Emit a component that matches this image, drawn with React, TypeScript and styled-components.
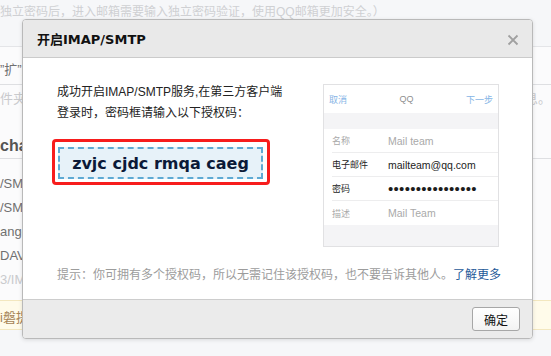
import React from 'react'
import styled, { createGlobalStyle } from 'styled-components'

const GlobalStyle = createGlobalStyle`
  html, body {
    margin: 0;
    padding: 0;
    background: #f6f7f9;
  }
  body {
    font-family: "Liberation Sans", "Noto Sans CJK SC", sans-serif;
  }
`

const Page = styled.div`
  position: relative;
  width: 551px;
  height: 356px;
  overflow: hidden;
  background: #f6f7f9;
`

const TopNote = styled.div`
  height: 47px;
  box-sizing: border-box;
  padding-top: 4px;
  font-size: 12px;
  line-height: 16px;
  color: #cfd0d3;
  white-space: nowrap;
  border-bottom: 1px solid #e4e5e8;
`

const List = styled.div`
  background: #fbfbfc;
`

const Row = styled.div<{ $height: number; $pad?: number; $tone?: 'dark' | 'light' | 'bold'; $line?: boolean }>`
  height: ${(p) => p.$height}px;
  box-sizing: border-box;
  display: flex;
  align-items: flex-end;
  justify-content: space-between;
  padding-bottom: ${(p) => p.$pad ?? 3}px;
  white-space: nowrap;
  font-size: ${(p) => (p.$tone === 'bold' ? 16 : 13)}px;
  font-weight: ${(p) => (p.$tone === 'bold' ? 700 : 400)};
  line-height: 18px;
  color: ${(p) => (p.$tone === 'light' ? '#c9cacd' : p.$tone === 'bold' ? '#555' : '#707070')};
  border-bottom: ${(p) => (p.$line ? '1px solid #dedfe2' : 'none')};
`

const Notice = styled.div`
  margin-top: 8px;
  height: 30px;
  box-sizing: border-box;
  background: #fffbea;
  border-top: 1px solid #f3e7bf;
  border-bottom: 1px solid #f3e7bf;
  padding: 6px 0 0 0;
  font-size: 13px;
  color: #a68457;
  white-space: nowrap;
`

const Dialog = styled.div`
  position: absolute;
  left: 22px;
  top: 19px;
  width: 511px;
  height: 320px;
  box-sizing: border-box;
  display: flex;
  flex-direction: column;
  background: #fff;
  border: 1px solid #b9b9b9;
  border-radius: 4px;
  overflow: hidden;
  box-shadow: 0 1px 4px rgba(0, 0, 0, 0.12);
`

const Header = styled.div`
  height: 37px;
  flex-shrink: 0;
  display: flex;
  align-items: center;
  justify-content: space-between;
  padding: 0 13px 0 14px;
  background: #e9e9e9;
  border-bottom: 1px solid #cbcbcb;
`

const Title = styled.div`
  font-family: "DejaVu Sans", "Noto Sans CJK SC", sans-serif;
  font-size: 13px;
  font-weight: 700;
  color: #111;
`

const Close = styled.svg`
  width: 12px;
  height: 12px;
  margin-top: 2px;
`

const Body = styled.div`
  flex: 1;
  display: flex;
  flex-direction: column;
  padding: 26px 33px 0 34px;
`

const Top = styled.div`
  display: flex;
  justify-content: space-between;
  align-items: flex-start;
`

const Lead = styled.div`
  font-size: 12px;
  line-height: 21px;
  margin-top: -2px;
  color: #222;
  white-space: nowrap;
`

const CodeFrame = styled.div`
  display: inline-block;
  margin: 15px 0 0 -5px;
  padding: 5px 4px 3px 3px;
  border: 3px solid #f71d1d;
  border-radius: 4px;
`

const Code = styled.div`
  width: 205px;
  height: 32px;
  box-sizing: border-box;
  display: flex;
  align-items: center;
  justify-content: center;
  background: #e7f2f9;
  border: 2px dashed #5eaad4;
  font-family: "DejaVu Sans", Verdana, sans-serif;
  font-size: 16px;
  font-weight: 700;
  color: #0b1a38;
  white-space: nowrap;
`

const Phone = styled.div`
  width: 176px;
  height: 163px;
  box-sizing: border-box;
  display: flex;
  flex-direction: column;
  border: 1px solid #e1e1e3;
  background: #fff;
  font-family: "Liberation Sans", "Noto Sans CJK SC", sans-serif;
`

const PhoneBar = styled.div`
  height: 28px;
  display: flex;
  align-items: center;
  justify-content: space-between;
  padding: 0 5px;
  font-size: 9px;
  color: #8f8f8f;
`

const BarAction = styled.span`
  color: #86b5e6;
`

const Strip = styled.div<{ $h: number }>`
  height: ${(p) => p.$h}px;
  background: #f4f4f6;
  flex: 1 0 auto;
`

const Field = styled.div<{ $last?: boolean }>`
  height: 24px;
  box-sizing: border-box;
  margin-left: 8px;
  display: flex;
  align-items: center;
  border-bottom: ${(p) => (p.$last ? 'none' : '1px solid #ededee')};
`

const FieldLabel = styled.span<{ $dim?: boolean }>`
  width: 56px;
  font-size: 9px;
  color: ${(p) => (p.$dim ? '#a9a9a9' : '#1c1c1c')};
`

const FieldValue = styled.span<{ $dim?: boolean }>`
  font-size: 10.5px;
  color: ${(p) => (p.$dim ? '#a9a9a9' : '#1c1c1c')};
`

const Dots = styled.span`
  font-size: 15px;
  line-height: 10px;
  color: #1c1c1c;
  letter-spacing: 0.3px;
`

const Hint = styled.div`
  margin-top: 19px;
  font-size: 12px;
  line-height: 18px;
  color: #9c9c9c;
  white-space: nowrap;

  a {
    color: #1f5a99;
    text-decoration: none;
  }
`

const Footer = styled.div`
  height: 38px;
  flex-shrink: 0;
  display: flex;
  align-items: center;
  justify-content: flex-end;
  padding-right: 12px;
  background: #ebebeb;
  border-top: 1px solid #cdcdcd;
`

const OkButton = styled.button`
  width: 48px;
  height: 24px;
  padding: 0;
  border: 1px solid #a7a7a7;
  border-radius: 3px;
  background: linear-gradient(#ffffff, #f3f3f3);
  font-family: "Noto Sans CJK SC", sans-serif;
  font-size: 12px;
  color: #111;
`

export default function App() {
  return (
    <Page>
      <GlobalStyle />
      <TopNote>独立密码后，进入邮箱需要输入独立密码验证，使用QQ邮箱更加安全。）</TopNote>
      <List>
        <Row $height={38} $pad={5} $line>
          <span>”扩”文</span>
        </Row>
        <Row $height={26} $tone="light">
          <span>件夹区</span>
          <span>息。</span>
        </Row>
        <Row $height={48} $pad={3} $tone="bold" $line>
          <span>cha</span>
        </Row>
        <Row $height={37}>
          <span>/SM</span>
        </Row>
        <Row $height={24}>
          <span>/SM</span>
        </Row>
        <Row $height={24}>
          <span>ange</span>
        </Row>
        <Row $height={24}>
          <span>DAV</span>
        </Row>
        <Row $height={24} $tone="light">
          <span>3/IM</span>
        </Row>
        <Notice>
          <span>i磐提</span>
        </Notice>
      </List>

      <Dialog>
        <Header>
          <Title>开启IMAP/SMTP</Title>
          <Close viewBox="0 0 12 12">
            <path d="M1.5 1.5 L10.5 10.5 M10.5 1.5 L1.5 10.5" stroke="#a0a0a0" strokeWidth="1.8" />
          </Close>
        </Header>
        <Body>
          <Top>
            <div>
              <Lead>
                成功开启IMAP/SMTP服务,在第三方客户端
                <br />
                登录时，密码框请输入以下授权码：
              </Lead>
              <CodeFrame>
                <Code>zvjc cjdc rmqa caeg</Code>
              </CodeFrame>
            </div>
            <Phone>
              <PhoneBar>
                <BarAction>取消</BarAction>
                <span>QQ</span>
                <BarAction>下一步</BarAction>
              </PhoneBar>
              <Strip $h={16} />
              <Field>
                <FieldLabel $dim>名称</FieldLabel>
                <FieldValue $dim>Mail team</FieldValue>
              </Field>
              <Field>
                <FieldLabel>电子邮件</FieldLabel>
                <FieldValue>mailteam@qq.com</FieldValue>
              </Field>
              <Field>
                <FieldLabel>密码</FieldLabel>
                <Dots>••••••••••••••••</Dots>
              </Field>
              <Field $last>
                <FieldLabel $dim>描述</FieldLabel>
                <FieldValue $dim>Mail Team</FieldValue>
              </Field>
              <Strip $h={21} />
            </Phone>
          </Top>
          <Hint>
            提示：你可拥有多个授权码，所以无需记住该授权码，也不要告诉其他人。<a href="#">了解更多</a>
          </Hint>
        </Body>
        <Footer>
          <OkButton>确定</OkButton>
        </Footer>
      </Dialog>
    </Page>
  )
}
